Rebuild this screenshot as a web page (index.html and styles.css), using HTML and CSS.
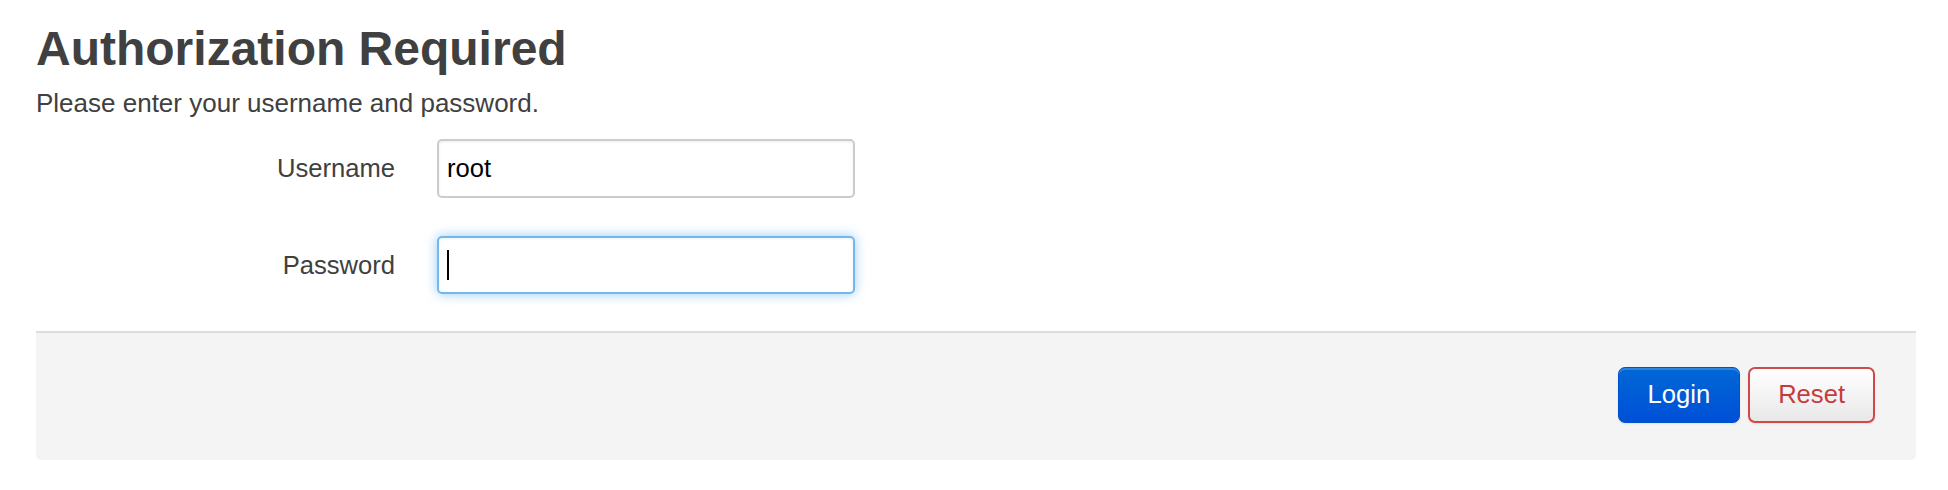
FILE: index.html
```html
<!DOCTYPE html>
<html lang="en">
<head>
<meta charset="utf-8">
<title>Authorization Required</title>
<link rel="stylesheet" href="styles.css">
</head>
<body>
<form class="login">
  <h2 class="title">Authorization Required</h2>
  <p class="intro">Please enter your username and password.</p>
  <div class="fields">
    <div class="row">
      <label class="label" for="user">Username</label>
      <div class="control">
        <input class="input" id="user" type="text" value="root">
      </div>
    </div>
    <div class="row">
      <label class="label" for="pass">Password</label>
      <div class="control">
        <input class="input input-focus" id="pass" type="password" value="">
        <span class="caret"></span>
      </div>
    </div>
  </div>
  <div class="actions">
    <button type="button" class="btn btn-primary">Login</button>
    <button type="reset" class="btn btn-reset">Reset</button>
  </div>
</form>
</body>
</html>
```

FILE: styles.css
```css
html, body {
  margin: 0;
  padding: 0;
  background: #ffffff;
}

body {
  padding: 0 32px 0 36px;
  font-family: "Liberation Sans", Arial, sans-serif;
  font-size: 25.6px;
  color: #404040;
}

.login {
  display: flex;
  flex-direction: column;
}

.title {
  margin: 22px 0 0 0;
  font-size: 48px;
  line-height: 53px;
  font-weight: bold;
  color: #404040;
}

.intro {
  margin: 10px 0 0 0;
  font-size: 26px;
  line-height: 36px;
}

.fields {
  display: flex;
  flex-direction: column;
  gap: 38px;
  margin-top: 18px;
}

.row {
  display: flex;
  align-items: center;
  gap: 42px;
}

.label {
  width: 359px;
  text-align: right;
  color: #404040;
}

.control {
  position: relative;
  display: flex;
}

.input {
  box-sizing: border-box;
  width: 418px;
  height: 59px;
  margin: 0;
  padding: 0 8px;
  border: 2px solid #cccccc;
  border-radius: 5px;
  background: #ffffff;
  box-shadow: inset 0 1px 3px rgba(0, 0, 0, 0.08);
  font-family: "Liberation Sans", Arial, sans-serif;
  font-size: 25.6px;
  color: #000000;
  outline: none;
}

.input-focus {
  height: 58px;
  border-color: #72b7ee;
  box-shadow: inset 0 1px 3px rgba(0, 0, 0, 0.06), 0 0 12px rgba(82, 168, 236, 0.6);
}

.caret {
  position: absolute;
  left: 10px;
  top: 14px;
  width: 2px;
  height: 30px;
  background: #000000;
}

.actions {
  display: flex;
  justify-content: flex-end;
  gap: 8px;
  margin-top: 37px;
  padding: 34px 41px 37px 0;
  border-top: 2px solid #dddddd;
  background: #f4f4f4;
  border-radius: 0 0 5px 5px;
}

.btn {
  box-sizing: border-box;
  height: 56px;
  margin: 0;
  font-family: "Liberation Sans", Arial, sans-serif;
  font-size: 25.6px;
  line-height: 1;
  border-radius: 7px;
  cursor: pointer;
}

.btn-primary {
  padding: 0 29px;
  border: 1px solid #0052cc;
  color: #ffffff;
  background: linear-gradient(#0068d5, #004fd7);
  box-shadow: inset 0 2px 0 rgba(255, 255, 255, 0.18), 0 1px 2px rgba(0, 0, 0, 0.08);
}

.btn-reset {
  padding: 0 28px;
  border: 2px solid #d14848;
  color: #c63c3c;
  background: linear-gradient(#ffffff, #e8e8e8);
  box-shadow: 0 1px 2px rgba(0, 0, 0, 0.08);
}
```
